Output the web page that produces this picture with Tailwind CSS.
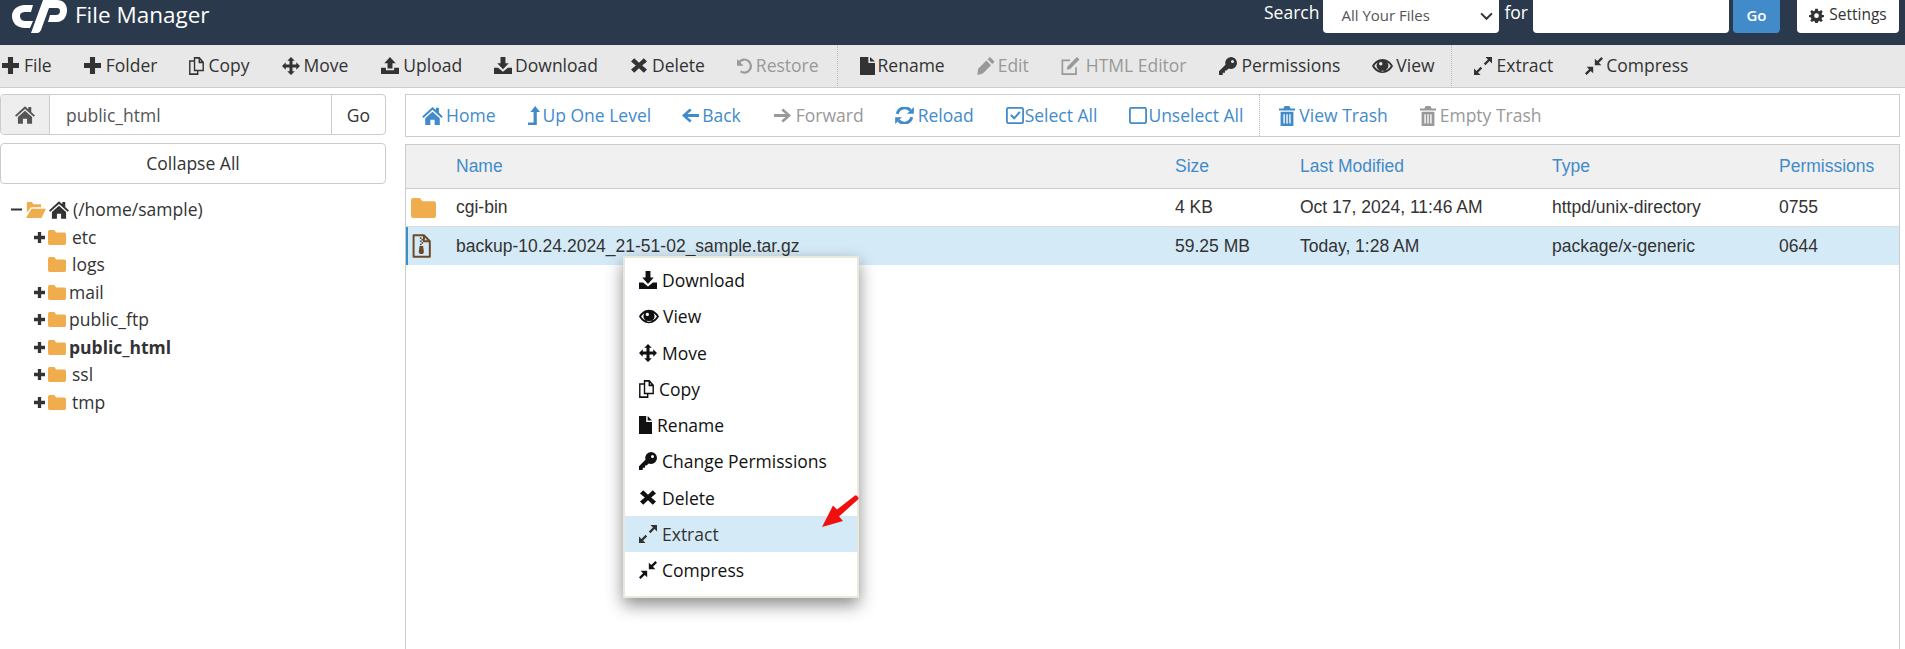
<!DOCTYPE html>
<html><head><meta charset="utf-8"><title>File Manager</title>
<script src="https://cdn.jsdelivr.net/npm/@tailwindcss/browser@4"></script></head>
<body class="m-0 bg-white">
<svg width="0" height="0" class="absolute"><defs>
<symbol id="plus" viewBox="2 2 20 20"><path fill="currentColor" d="M9 2h6v7h7v6h-7v7H9v-7H2V9h7z"/></symbol>
<symbol id="copy" viewBox="2 2 19 20" preserveAspectRatio="none"><path fill="none" stroke="currentColor" stroke-width="1.800" d="M9 6.500H3v14.500h10v-4M9 3v14h11V8l-5-5zM15 3v5h5"/></symbol>
<symbol id="move" viewBox="0 0 24 24"><path fill="currentColor" d="M12 0l5 5h-3v5h5V7l5 5-5 5v-3h-5v5h3l-5 5-5-5h3v-5H5v3l-5-5 5-5v3h5V5H7z"/></symbol>
<symbol id="upload" viewBox="1 1 22 22" preserveAspectRatio="none"><path fill="currentColor" d="M12 1l7 8h-4v7H9V9H5zM1 15h6v3h10v-3h6v8H1z"/></symbol>
<symbol id="download" viewBox="1 1 22 22" preserveAspectRatio="none"><path fill="currentColor" d="M9 1h6v8h4l-7 8-7-8h4zM1 15h5l6 5 6-5h5v8H1z"/></symbol>
<symbol id="x" viewBox="2 3 20 18"><path fill="currentColor" d="M6 3l6 5.500L18 3l4 4-6 5 6 5-4 4-6-5.500L6 21l-4-4 6-5-6-5z"/></symbol>
<symbol id="undo" viewBox="2 2 22 21"><path fill="none" stroke="currentColor" stroke-width="3" d="M5 7a9 9 0 1 1 2 13"/><path fill="currentColor" d="M2 3v9h9z"/></symbol>
<symbol id="file" viewBox="3 0 18 24" preserveAspectRatio="none"><path fill="currentColor" d="M3 0h10v8h8v16H3zM15 0l6 6h-6z"/></symbol>
<symbol id="pencil" viewBox="1 1 22 23"><path fill="currentColor" d="M17 1l6 6-3 3-6-6zM12.500 5.500l6 6L8 22l-7 2 1-8z"/></symbol>
<symbol id="editbox" viewBox="2 1 21 21"><path fill="none" stroke="currentColor" stroke-width="2" d="M12 5H3v16h16v-8"/><path fill="currentColor" d="M20 1l3 3-11 11-4 1 1-4z"/></symbol>
<symbol id="key" viewBox="0 0 24 24"><path fill="currentColor" fill-rule="evenodd" d="M16 0a8 8 0 0 1 0 16 8 8 0 0 1-3-.6L10 18H8v3H5v3H0v-5l8.600-8.600A8 8 0 0 1 16 0zm2 4a2 2 0 1 0 0 4 2 2 0 0 0 0-4z"/></symbol>
<symbol id="eye" viewBox="0 3 24 18"><path fill="currentColor" fill-rule="evenodd" d="M12 4c5.500 0 9.500 3.500 12 8-2.500 4.500-6.500 8-12 8S2.500 16.500 0 12c2.500-4.500 6.500-8 12-8zM2.500 12c2 3 5 5.500 9.500 5.500s7.500-2.500 9.500-5.500c-1-1.600-2.300-3-4-4a6.500 6.500 0 1 1-11 0c-1.700 1-3 2.400-4 4zM10 7.500a2 2 0 1 0 0 4 2 2 0 0 0 0-4z"/></symbol>
<symbol id="expand" viewBox="1 1 22 22"><path fill="currentColor" d="M15 1h8v8l-3-3-5 5-2-2 5-5zM11 15l-5 5 3 3H1v-8l3 3 5-5z"/></symbol>
<symbol id="compress" viewBox="1 1 22 22"><path fill="currentColor" d="M21 1l2 2-5 5 3 3h-8V3l3 3zM3 13h8v8l-3-3-5 5-2-2 5-5z"/></symbol>
<symbol id="home" viewBox="0 2 24 21"><path fill="currentColor" d="M12 2l4 3.600V3h3.500v5.800L24 13l-1.500 1.700L12 5.300 1.500 14.700 0 13zM12 7.500l8.500 7.500v8H14.500v-6h-5v6H3.500v-8z"/></symbol>
<symbol id="up" viewBox="5 1 15 22" preserveAspectRatio="none"><path fill="currentColor" d="M14 1l6 7h-4v15H5v-3h7V8H8z"/></symbol>
<symbol id="left" viewBox="1 3 22 18"><path fill="currentColor" d="M11 3l2.500 2.500L8 10.200h15v3.600H8l5.500 4.700L11 21 1 12z"/></symbol>
<symbol id="right" viewBox="1 3 22 18"><path fill="currentColor" d="M13 3l-2.500 2.500 5.500 4.700H1v3.600h15l-5.500 4.700L13 21l10-9z"/></symbol>
<symbol id="reload" viewBox="1 2 22 20"><path fill="none" stroke="currentColor" stroke-width="3.500" d="M3.500 10A9 9 0 0 1 19 6M20.500 14A9 9 0 0 1 5 18"/><path fill="currentColor" d="M23 2v8h-8zM1 22v-8h8z"/></symbol>
<symbol id="check" viewBox="1 2 22 21"><rect x="2" y="3" width="20" height="19" rx="2" fill="none" stroke="currentColor" stroke-width="2.200"/><path fill="none" stroke="currentColor" stroke-width="2.600" d="M7 12l4 4 7-8"/></symbol>
<symbol id="square" viewBox="1 2 22 21"><rect x="2" y="3" width="20" height="19" rx="2" fill="none" stroke="currentColor" stroke-width="2.200"/></symbol>
<symbol id="trash" viewBox="2 0 20 24" preserveAspectRatio="none"><path fill="currentColor" d="M9 0h6l1.500 3H22v2.500H2V3h5.500zM4 7h16v17H4zM7.500 10v11h1.700V10zM11.200 10v11h1.700V10zM14.800 10v11h1.700V10z" fill-rule="evenodd"/></symbol>
<symbol id="folder" viewBox="0 3 24 18" preserveAspectRatio="none"><path fill="currentColor" d="M2 3h6.500l2.500 3h11a2 2 0 0 1 2 2v11a2 2 0 0 1-2 2H2a2 2 0 0 1-2-2V5a2 2 0 0 1 2-2z"/></symbol>
<symbol id="folderopen" viewBox="0 3 24 18" preserveAspectRatio="none"><path fill="currentColor" d="M1 3h6l2 2.500h9V9H6L1 15zM6.500 10.500H24L18.500 21H0z"/></symbol>
<symbol id="cog" viewBox="0 0 24 24"><path fill="currentColor" fill-rule="evenodd" d="M10 1h4l.7 3.300 2 .8L19.500 3.300 22 6l-1.900 2.800.8 2L24 11.500v3l-3.100.7-.8 2L22 20l-2.500 2.500-2.800-1.900-2 .8L14 24h-4l-.7-2.600-2-.8L4.500 22.500 2 20l1.900-2.800-.8-2L0 14.500v-3l3.100-.7.8-2L2 6l2.500-2.700 2.800 1.800 2-.8zM12 8.500a3.800 3.800 0 1 0 0 7.600 3.800 3.800 0 0 0 0-7.600z"/></symbol>
<symbol id="zip" viewBox="0 0 24 30"><path fill="none" stroke="currentColor" stroke-width="2.500" stroke-linejoin="round" d="M2 1.500h13L22.500 9v19.500H2zM15 1.500V9h7.500"/><path fill="currentColor" d="M10 4h2v2h-2zM12 6h2v2h-2zM10 8h2v2h-2zM12 10h2v2h-2zM10 12h2v2h-2zM9.500 15h4.500l1 7a3 3 0 0 1-6.500 0z"/></symbol>
</defs></svg>

<div class="relative w-[1905px] h-[649px] overflow-hidden font-['Open_Sans',sans-serif] text-[#333]">
  <!-- top bar -->
  <header class="h-[45px] bg-[#2a3a4c] flex items-start text-white">
    <svg class="ml-[12px] w-[55px] h-[33px]" viewBox="0 0 55 33"><path fill="#fff" d="M21 5H13C5 5 0 10 0 16c0 7 5 12 13 12h5l3-7h-7c-4 0-6-2-6-5s2-4 6-4h5z"/><path fill="#fff" d="M19 33h6c2 0 3-1 4-3l8-22h8c2 0 3 1 3 3 0 3-2 4-4 4h-6l-2 7h9c6 0 10-5 10-12 0-6-4-10-10-10H31z"/></svg>
    <span class="ml-[8px] text-[22.500px] leading-[30px]">File Manager</span>
    <div class="ml-auto flex items-start">
      <span class="text-[17.500px] leading-[25px]">Search</span>
      <div class="ml-[4px] w-[176px] h-[33px] bg-white rounded-b-[4px] flex items-center pl-[18px] pr-[6px] pb-[3px] text-[15px] text-[#555]"><span>All Your Files</span><svg class="ml-auto w-[13px] h-[13px]" viewBox="0 0 12 12"><path d="M1 4l5 5 5-5" fill="none" stroke="#333" stroke-width="1.800"/></svg></div>
      <span class="ml-[5px] text-[17.500px] leading-[25px]">for</span>
      <div class="ml-[5px] w-[196px] h-[33px] bg-white rounded-b-[4px]"></div>
      <div class="ml-[4px] w-[47px] h-[33px] bg-[#428bca] rounded-b-[4px] flex items-center justify-center pb-[3px] text-[15px] font-semibold">Go</div>
      <div class="ml-[17px] mr-[6px] w-[102px] h-[33px] bg-white rounded-b-[4px] flex items-center justify-center pb-[3px] gap-[5px] text-[15.500px] text-[#333]"><svg class="w-[15px] h-[15px]"><use href="#cog"/></svg><span>Settings</span></div>
    </div>
  </header>
  <!-- toolbar -->
  <nav class="h-[43px] bg-[#e8e8e8] border-b border-[#ccc] flex items-center pb-[1px] text-[17.500px] whitespace-nowrap">
    <span class="ml-[2px] flex items-center gap-[5px]"><svg class="w-[17px] h-[17px]"><use href="#plus"/></svg>File</span>
    <span class="ml-[32px] flex items-center gap-[5px]"><svg class="w-[17px] h-[17px]"><use href="#plus"/></svg>Folder</span>
    <span class="ml-[32px] flex items-center gap-[4px]"><svg class="w-[15px] h-[18px]"><use href="#copy"/></svg>Copy</span>
    <span class="ml-[33px] flex items-center gap-[3px]"><svg class="w-[18px] h-[18px]"><use href="#move"/></svg>Move</span>
    <span class="ml-[33px] flex items-center gap-[4px]"><svg class="w-[18px] h-[17px]"><use href="#upload"/></svg>Upload</span>
    <span class="ml-[32px] flex items-center gap-[3px]"><svg class="w-[18px] h-[17px]"><use href="#download"/></svg>Download</span>
    <span class="ml-[33px] flex items-center gap-[5px]"><svg class="w-[16px] h-[15px]"><use href="#x"/></svg>Delete</span>
    <span class="ml-[32px] flex items-center gap-[3px] text-[#999]"><svg class="w-[16px] h-[16px]"><use href="#undo"/></svg>Restore</span>
    <span class="ml-[18px] self-stretch w-px border-l border-dotted border-[#bbb]"></span>
    <span class="ml-[22px] flex items-center gap-[3px]"><svg class="w-[15px] h-[18px]"><use href="#file"/></svg>Rename</span>
    <span class="ml-[32px] flex items-center gap-[3px] text-[#999]"><svg class="w-[18px] h-[18px]"><use href="#pencil"/></svg>Edit</span>
    <span class="ml-[32px] flex items-center gap-[6px] text-[#999]"><svg class="w-[19px] h-[18px]"><use href="#editbox"/></svg>HTML Editor</span>
    <span class="ml-[32px] flex items-center gap-[5px]"><svg class="w-[18px] h-[18px]"><use href="#key"/></svg>Permissions</span>
    <span class="ml-[32px] flex items-center gap-[3px]"><svg class="w-[21px] h-[16px]"><use href="#eye"/></svg>View</span>
    <span class="ml-[16px] self-stretch w-px border-l border-dotted border-[#bbb]"></span>
    <span class="ml-[22px] flex items-center gap-[5px]"><svg class="w-[18px] h-[18px]"><use href="#expand"/></svg>Extract</span>
    <span class="ml-[32px] flex items-center gap-[3px]"><svg class="w-[18px] h-[18px]"><use href="#compress"/></svg>Compress</span>
  </nav>
  <main class="flex">
    <!-- left column -->
    <aside class="w-[386px] shrink-0 pt-[6px]">
      <div class="h-[41px] border border-[#ccc] rounded-[4px] flex items-stretch text-[17.500px]">
        <div class="w-[49px] bg-[#eee] border-r border-[#ccc] rounded-l-[4px] flex items-center justify-center text-[#555]"><svg class="w-[20px] h-[18px]"><use href="#home"/></svg></div>
        <div class="flex-1 pl-[16px] pt-[1px] flex items-center text-[#555]">public_html</div>
        <div class="w-[54px] border-l border-[#ccc] pt-[1px] flex items-center justify-center">Go</div>
      </div>
      <div class="mt-[8px] h-[41px] border border-[#ccc] rounded-[4px] flex items-center justify-center text-[17.500px]">Collapse All</div>
      <ul class="mt-[12px] text-[17.500px] leading-[27.500px] text-[#333]">
        <li class="flex items-center h-[27.500px] pl-[11px]"><svg class="w-[11px] h-[11px]" viewBox="0 0 11 11"><path d="M0 4.500h11v2H0z" fill="#333"/></svg><svg class="ml-[4px] w-[20px] h-[16px] text-[#f0ad4e]"><use href="#folderopen"/></svg><svg class="ml-[3px] w-[20px] h-[18px]"><use href="#home"/></svg><span class="ml-[4px]">(/home/sample)</span></li>
        <li class="flex items-center h-[27.500px] pl-[34px]"><svg class="w-[11px] h-[11px]"><use href="#plus"/></svg><svg class="ml-[3px] w-[18px] h-[15px] text-[#f0ad4e]"><use href="#folder"/></svg><span class="ml-[6px]">etc</span></li>
        <li class="flex items-center h-[27.500px] pl-[48px]"><svg class="w-[18px] h-[15px] text-[#f0ad4e]"><use href="#folder"/></svg><span class="ml-[6px]">logs</span></li>
        <li class="flex items-center h-[27.500px] pl-[34px]"><svg class="w-[11px] h-[11px]"><use href="#plus"/></svg><svg class="ml-[3px] w-[18px] h-[15px] text-[#f0ad4e]"><use href="#folder"/></svg><span class="ml-[3px]">mail</span></li>
        <li class="flex items-center h-[27.500px] pl-[34px]"><svg class="w-[11px] h-[11px]"><use href="#plus"/></svg><svg class="ml-[3px] w-[18px] h-[15px] text-[#f0ad4e]"><use href="#folder"/></svg><span class="ml-[3px]">public_ftp</span></li>
        <li class="flex items-center h-[27.500px] pl-[34px]"><svg class="w-[11px] h-[11px]"><use href="#plus"/></svg><svg class="ml-[3px] w-[18px] h-[15px] text-[#f0ad4e]"><use href="#folder"/></svg><span class="ml-[3px] font-bold">public_html</span></li>
        <li class="flex items-center h-[27.500px] pl-[34px]"><svg class="w-[11px] h-[11px]"><use href="#plus"/></svg><svg class="ml-[3px] w-[18px] h-[15px] text-[#f0ad4e]"><use href="#folder"/></svg><span class="ml-[6px]">ssl</span></li>
        <li class="flex items-center h-[27.500px] pl-[34px]"><svg class="w-[11px] h-[11px]"><use href="#plus"/></svg><svg class="ml-[3px] w-[18px] h-[15px] text-[#f0ad4e]"><use href="#folder"/></svg><span class="ml-[6px]">tmp</span></li>
      </ul>
    </aside>
    <!-- right column -->
    <section class="ml-[19px] w-[1495px] pt-[6px]">
      <div class="h-[43px] border border-[#ccc] flex items-center text-[17.500px] text-[#428bca] whitespace-nowrap pl-[16px]">
        <span class="flex items-center gap-[3px]"><svg class="w-[21px] h-[18px]"><use href="#home"/></svg>Home</span>
        <span class="ml-[33px] flex items-center gap-[2px]"><svg class="w-[12px] h-[19px]"><use href="#up"/></svg>Up One Level</span>
        <span class="ml-[31px] flex items-center gap-[3px]"><svg class="w-[17px] h-[15px]"><use href="#left"/></svg>Back</span>
        <span class="ml-[33px] flex items-center gap-[5px] text-[#999]"><svg class="w-[17px] h-[15px]"><use href="#right"/></svg>Forward</span>
        <span class="ml-[31px] flex items-center gap-[4px]"><svg class="w-[19px] h-[17px]"><use href="#reload"/></svg>Reload</span>
        <span class="ml-[32px] flex items-center gap-[1px]"><svg class="w-[18px] h-[17px]"><use href="#check"/></svg>Select All</span>
        <span class="ml-[32px] flex items-center gap-[1px]"><svg class="w-[18px] h-[17px]"><use href="#square"/></svg>Unselect All</span>
        <span class="ml-[16px] self-stretch w-px border-l border-dotted border-[#bbb]"></span>
        <span class="ml-[19px] flex items-center gap-[4px]"><svg class="w-[16px] h-[20px]"><use href="#trash"/></svg>View Trash</span>
        <span class="ml-[32px] flex items-center gap-[4px] text-[#999]"><svg class="w-[16px] h-[20px]"><use href="#trash"/></svg>Empty Trash</span>
      </div>
      <div class="mt-[7px] h-[520px] border border-[#ccc] font-['Liberation_Sans',sans-serif] text-[17.500px]">
        <div class="h-[44px] bg-[#f0f0f0] border-b border-[#ccc] grid grid-cols-[50px_719px_125px_252px_227px_1fr] items-center text-[#428bca]">
          <span></span><span>Name</span><span>Size</span><span>Last Modified</span><span>Type</span><span>Permissions</span>
        </div>
        <div class="h-[38px] border-b border-[#ddd] grid grid-cols-[50px_719px_125px_252px_227px_1fr] items-center">
          <span class="pl-[5px] flex"><svg class="w-[25px] h-[20px] text-[#f0ad4e]"><use href="#folder"/></svg></span><span>cgi-bin</span><span>4 KB</span><span>Oct 17, 2024, 11:46 AM</span><span>httpd/unix-directory</span><span>0755</span>
        </div>
        <div class="h-[38px] bg-[#d5eaf7] border-l-2 border-[#3b8fc8] grid grid-cols-[48px_719px_125px_252px_227px_1fr] items-center">
          <span class="pl-[4px] flex"><svg class="w-[19px] h-[24px] text-[#6b4a2a]"><use href="#zip"/></svg></span><span>backup-10.24.2024_21-51-02_sample.tar.gz</span><span>59.25 MB</span><span>Today, 1:28 AM</span><span>package/x-generic</span><span>0644</span>
        </div>
      </div>
    </section>
  </main>
  <!-- context menu -->
  <div class="absolute left-[623px] top-[256px] w-[236px] h-[342px] bg-white border-2 border-[#e8e8dc] shadow-[0_7px_16px_rgba(0,0,0,.45)] pt-[4px] text-[17.500px] text-[#111]">
    <div class="h-[36.250px] flex items-center pl-[14px] gap-[5px]"><svg class="w-[18px] h-[18px]"><use href="#download"/></svg>Download</div>
    <div class="h-[36.250px] flex items-center pl-[14px] gap-[4px]"><svg class="w-[20px] h-[15px]"><use href="#eye"/></svg>View</div>
    <div class="h-[36.250px] flex items-center pl-[14px] gap-[5px]"><svg class="w-[18px] h-[18px]"><use href="#move"/></svg>Move</div>
    <div class="h-[36.250px] flex items-center pl-[14px] gap-[5px]"><svg class="w-[15px] h-[18px]"><use href="#copy"/></svg>Copy</div>
    <div class="h-[36.250px] flex items-center pl-[14px] gap-[5px]"><svg class="w-[13px] h-[18px]"><use href="#file"/></svg>Rename</div>
    <div class="h-[36.250px] flex items-center pl-[14px] gap-[5px]"><svg class="w-[18px] h-[18px]"><use href="#key"/></svg>Change Permissions</div>
    <div class="h-[36.250px] flex items-center pl-[15px] gap-[6px]"><svg class="w-[16px] h-[15px]"><use href="#x"/></svg>Delete</div>
    <div class="h-[36.250px] flex items-center pl-[14px] gap-[5px] bg-[#d5eaf7] text-[#333]"><svg class="w-[18px] h-[18px]"><use href="#expand"/></svg>Extract</div>
    <div class="h-[36.250px] flex items-center pl-[14px] gap-[5px]"><svg class="w-[18px] h-[18px]"><use href="#compress"/></svg>Compress</div>
  </div>
  <svg class="absolute left-[818px] top-[494px] w-[44px] h-[36px]" viewBox="0 0 44 36"><path fill="#f01010" d="M40 3l-1.500-1.500a1.800 1.800 0 0 0-1.500 0L19 15.500l-4-4L4 33l21-6-4-4.500L40 5.500a1.800 1.800 0 0 0 0-2.500z"/></svg>
</div>
</body></html>
